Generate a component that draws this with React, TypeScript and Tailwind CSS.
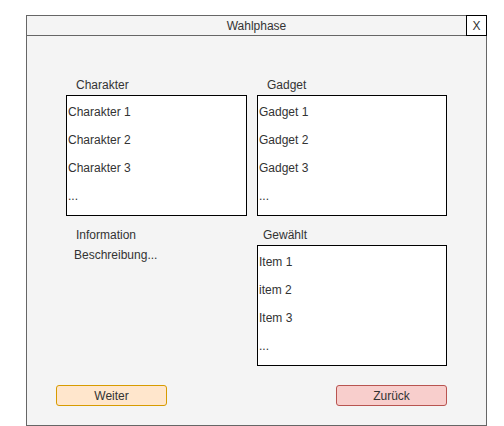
const charaktere = ["Charakter 1", "Charakter 2", "Charakter 3", "..."]
const gadgets = ["Gadget 1", "Gadget 2", "Gadget 3", "..."]
const gewaehlt = ["Item 1", "item 2", "Item 3", "..."]

function ListBox({ items, width }: { items: string[]; width: string }) {
  return (
    <div className={`flex h-[121px] flex-col border border-black bg-white pt-[2px] pl-[1px] ${width}`}>
      {items.map((item) => (
        <div key={item} className="flex h-[28px] items-center text-[12px] leading-none text-[#333]">
          {item}
        </div>
      ))}
    </div>
  )
}

export default function App() {
  return (
    <div
      className="h-[426px] w-[504px] bg-white pt-[15px] pl-[26px]"
      style={{ fontFamily: '"Liberation Sans", Arial, sans-serif' }}
    >
      <div className="flex h-[411px] w-[461px] flex-col border border-[#666] bg-[#f4f4f4]">
        {/* title bar */}
        <div className="relative flex h-[20px] shrink-0 items-center justify-center border-b border-[#666] text-[12px] text-[#333]">
          Wahlphase
          <div className="absolute -top-px -right-px flex h-[21px] w-[21px] items-center justify-center border border-black bg-white text-[12px] text-[#333]">
            X
          </div>
        </div>

        <div className="flex flex-col pt-[39px] pl-[39px]">
          <div className="grid grid-cols-[181px_190px] gap-x-[10px]">
            <div className="flex h-[20px] items-center pl-[10px] text-[12px] text-[#333]">Charakter</div>
            <div className="flex h-[20px] items-center pl-[10px] text-[12px] text-[#333]">Gadget</div>
            <ListBox items={charaktere} width="w-[181px]" />
            <ListBox items={gadgets} width="w-[190px]" />
          </div>

          <div className="mt-[9px] grid grid-cols-[181px_190px] gap-x-[10px]">
            <div className="flex flex-col">
              <div className="flex h-[20px] items-center pl-[10px] text-[12px] text-[#333]">Information</div>
              <div className="flex h-[20px] items-center pl-[8px] text-[12px] text-[#333]">Beschreibung...</div>
            </div>
            <div className="flex flex-col">
              <div className="flex h-[20px] items-center pl-[6px] text-[12px] text-[#333]">Gewählt</div>
              <ListBox items={gewaehlt} width="w-[190px]" />
            </div>
          </div>
        </div>

        <div className="mt-[19px] mr-[39px] ml-[29px] flex justify-between">
          <button className="flex h-[21px] w-[111px] items-center justify-center rounded-[3px] border border-[#d79b00] bg-[#ffe6cc] text-[12px] text-[#333]">
            Weiter
          </button>
          <button className="flex h-[21px] w-[111px] items-center justify-center rounded-[3px] border border-[#b85450] bg-[#f8cecc] text-[12px] text-[#333]">
            Zurück
          </button>
        </div>
      </div>
    </div>
  )
}
